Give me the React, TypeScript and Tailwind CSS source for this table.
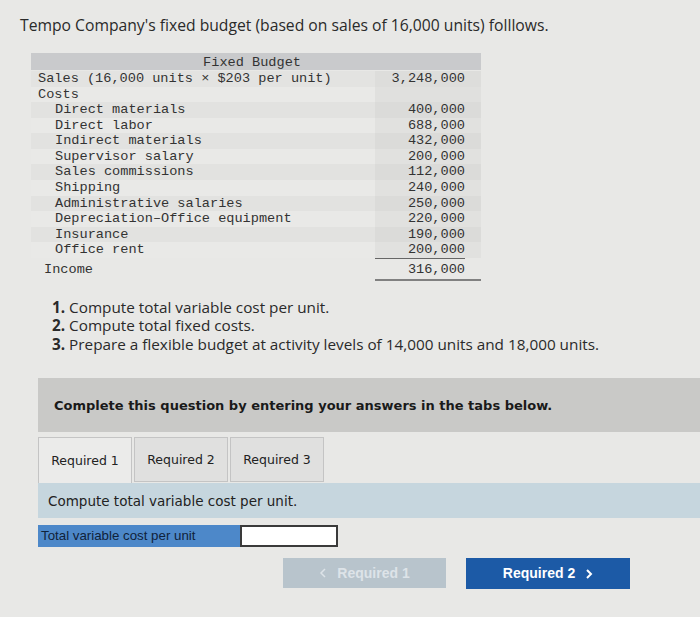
import React from "react";

const rows: { label: string; value: string; indent: number }[] = [
  { label: "Sales (16,000 units × $203 per unit)", value: "3,248,000", indent: 0 },
  { label: "Costs", value: "", indent: 0 },
  { label: "Direct materials", value: "400,000", indent: 1 },
  { label: "Direct labor", value: "688,000", indent: 1 },
  { label: "Indirect materials", value: "432,000", indent: 1 },
  { label: "Supervisor salary", value: "200,000", indent: 1 },
  { label: "Sales commissions", value: "112,000", indent: 1 },
  { label: "Shipping", value: "240,000", indent: 1 },
  { label: "Administrative salaries", value: "250,000", indent: 1 },
  { label: "Depreciation–Office equipment", value: "220,000", indent: 1 },
  { label: "Insurance", value: "190,000", indent: 1 },
  { label: "Office rent", value: "200,000", indent: 1 },
];

export default function App() {
  return (
    <div className="w-[700px] h-[617px] bg-[#e8e8e6] overflow-hidden relative text-[#222]">
      <div className="pt-[14px] pl-[20px] text-[15.7px] font-['Open_Sans',sans-serif] text-[#2a2a2a] leading-[22px]">
        Tempo Company's fixed budget (based on sales of 16,000 units) folllows.
      </div>

      <div className="mt-[17px] ml-[31px] w-[450px] font-['Liberation_Mono',monospace] text-[13.6px] text-[#333]">
        <div className="h-[17px] bg-[#c9cacc] flex">
          <div className="w-[344px] flex justify-end pr-[74px] leading-[19px]">Fixed Budget</div>
          <div className="flex-1" />
        </div>
        <div className="flex h-[16px] leading-[16px] mt-[1px] bg-[#e3e3e1]">
          <div className="w-[344px] pl-[7px]">{rows[0].label}</div>
          <div className="flex-1 bg-[#dddddb] text-right pr-[16px]">{rows[0].value}</div>
        </div>
        <div className="flex h-[15px] leading-[15px] bg-[#e9e9e7]">
          <div className="w-[344px] pl-[7px]">{rows[1].label}</div>
          <div className="flex-1 bg-[#e0e0de]" />
        </div>
        {rows.slice(2).map((r, i) => (
          <div key={r.label} className={`flex h-[15.6px] leading-[15.6px] ${i % 2 === 0 ? "bg-[#e2e2e0]" : "bg-[#e9e9e7]"}`}>
            <div className="w-[344px] pl-[24px]">{r.label}</div>
            <div className={`flex-1 ${i % 2 === 0 ? "bg-[#dbdbd9]" : "bg-[#e1e1df]"} text-right pr-[16px]`}>
              <div className={i === rows.length - 3 ? "border-b border-[#666]" : ""}>{r.value}</div>
            </div>
          </div>
        ))}
        <div className="flex h-[21px] leading-[20px] mt-[2px]">
          <div className="w-[344px] pl-[13px]">Income</div>
          <div className="flex-1 text-right pr-[16px] border-b-2 border-[#808080]">316,000</div>
        </div>
      </div>

      <div className="mt-[17px] ml-[52px] font-['Open_Sans',sans-serif] text-[15.3px] text-[#2a2a2a] leading-[18.5px]">
        <div><span className="font-bold">1.</span> Compute total variable cost per unit.</div>
        <div><span className="font-bold">2.</span> Compute total fixed costs.</div>
        <div><span className="font-bold">3.</span> Prepare a flexible budget at activity levels of 14,000 units and 18,000 units.</div>
      </div>

      <div className="mt-[25px] ml-[38px] h-[54px] bg-[#c9c9c7] flex items-center pl-[16px] font-['DejaVu_Sans',sans-serif] font-bold text-[13px] text-[#1a1a1a]">
        Complete this question by entering your answers in the tabs below.
      </div>

      <div className="ml-[38px] mt-[5px] flex gap-[2px] font-['DejaVu_Sans',sans-serif] text-[12.5px] text-[#222]">
        <div className="w-[94px] h-[46px] bg-[#ebebea] border border-b-0 border-[#c4c4c4] flex items-center justify-center">Required 1</div>
        <div className="w-[94px] h-[45px] bg-[#e0e0df] border border-[#c4c4c4] flex items-center justify-center">Required 2</div>
        <div className="w-[94px] h-[45px] bg-[#e0e0df] border border-[#c4c4c4] flex items-center justify-center">Required 3</div>
      </div>
      <div className="ml-[38px] h-[35px] bg-[#c6d6de] flex items-center pl-[10px] font-['DejaVu_Sans',sans-serif] text-[13.5px] text-[#222]">
        Compute total variable cost per unit.
      </div>

      <div className="ml-[38px] mt-[7px] flex h-[22px] font-['Liberation_Sans',sans-serif] text-[13.3px]">
        <div className="w-[202px] bg-[#4d88c9] text-[#10223a] flex items-center pl-[3px]">Total variable cost per unit</div>
        <div className="w-[98px] bg-white border-2 border-[#3a3a3a]" />
      </div>

      <div className="mt-[11px] ml-[283px] flex gap-[20px] font-['Liberation_Sans',sans-serif] font-bold text-[14px]">
        <div className="w-[163px] h-[30px] bg-[#b8c4cc] text-[#dde3e8] flex items-center justify-center gap-[10px]">
          <svg width="8" height="12" viewBox="0 0 8 12"><path d="M6 2 L2 6 L6 10" stroke="#dde3e8" strokeWidth="1.5" fill="none" /></svg>
          <span>Required 1</span>
        </div>
        <div className="w-[164px] h-[31px] bg-[#1c5aa6] text-white flex items-center justify-center gap-[10px]">
          <span>Required 2</span>
          <svg width="8" height="12" viewBox="0 0 8 12"><path d="M2 2 L6 6 L2 10" stroke="white" strokeWidth="2" fill="none" /></svg>
        </div>
      </div>
    </div>
  );
}
